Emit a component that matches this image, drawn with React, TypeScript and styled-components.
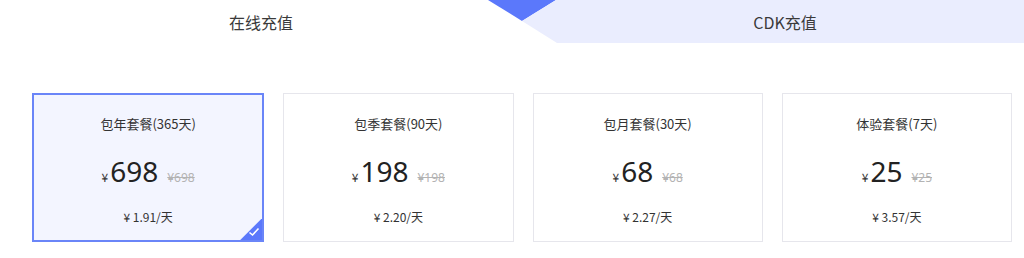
import React from "react";
import styled, { createGlobalStyle } from "styled-components";

const Global = createGlobalStyle`
  html, body { margin: 0; padding: 0; background: #fff; }
  body { font-family: "Noto Sans CJK SC", "Noto Sans", sans-serif; color: #333; }
`;

const Page = styled.div`
  width: 1024px;
  height: 258px;
  overflow: hidden;
  background: #fff;
`;

const Header = styled.div`
  position: relative;
  display: flex;
  height: 43px;
  &::before {
    content: "";
    position: absolute;
    left: 488px;
    top: 0;
    width: 68px;
    height: 21px;
    background: #5b78fb;
    clip-path: polygon(0 0, 100% 0, 50% 100%);
  }
`;

const Tab = styled.div<{ $active?: boolean }>`
  display: flex;
  align-items: center;
  justify-content: center;
  font-size: 16px;
  color: #3a3a3a;
  height: 43px;
  box-sizing: border-box;
  ${(p) =>
    p.$active
      ? `width: 522px;`
      : `flex: 1;
         padding-left: 24px;
         background: #eaedfe;
         clip-path: polygon(34px 0, 100% 0, 100% 100%, 35px 100%, 0 21px);`}
`;

const Cards = styled.div`
  display: flex;
  gap: 19px;
  padding: 50px 12px 0 32px;
`;

const Card = styled.div<{ $selected?: boolean }>`
  position: relative;
  flex: 1 1 0;
  min-width: 0;
  height: 149px;
  box-sizing: border-box;
  display: flex;
  flex-direction: column;
  align-items: center;
  border: ${(p) => (p.$selected ? "2px solid #6a85f8" : "1px solid #e6e6ec")};
  background: ${(p) => (p.$selected ? "#f3f5ff" : "#fff")};
  padding-top: ${(p) => (p.$selected ? "20px" : "21px")};
  overflow: hidden;
`;

const Title = styled.div`
  font-size: 13px;
  line-height: 18px;
  color: #333;
`;

const PriceRow = styled.div`
  display: flex;
  align-items: baseline;
  margin-top: 19px;
  height: 38px;
`;

const Yen = styled.span`
  font-size: 12px;
  margin-right: 2px;
  color: #333;
`;

const Amount = styled.span`
  font-size: 28px;
  line-height: 38px;
  color: #222;
  font-family: "Noto Sans", "Open Sans", sans-serif;
`;

const Old = styled.span`
  font-size: 12px;
  color: #b3b3b3;
  text-decoration: line-through;
  margin-left: 9px;
  font-family: "Noto Sans", "Open Sans", sans-serif;
`;

const PerDay = styled.div`
  margin-top: 18px;
  font-size: 12px;
  line-height: 18px;
  color: #333;
`;

const Corner = styled.div`
  position: absolute;
  right: 0;
  bottom: 0;
  width: 22px;
  height: 22px;
  background: #5b78fb;
  clip-path: polygon(100% 0, 100% 100%, 0 100%);
  display: flex;
  align-items: flex-end;
  justify-content: flex-end;
`;

const plans = [
  { title: "包年套餐(365天)", price: "698", old: "¥698", per: "¥ 1.91/天", selected: true },
  { title: "包季套餐(90天)", price: "198", old: "¥198", per: "¥ 2.20/天" },
  { title: "包月套餐(30天)", price: "68", old: "¥68", per: "¥ 2.27/天" },
  { title: "体验套餐(7天)", price: "25", old: "¥25", per: "¥ 3.57/天" },
];

export default function App() {
  return (
    <Page>
      <Global />
      <Header>
        <Tab $active>在线充值</Tab>
        <Tab>CDK充值</Tab>
      </Header>
      <Cards>
        {plans.map((p) => (
          <Card key={p.title} $selected={p.selected}>
            <Title>{p.title}</Title>
            <PriceRow>
              <Yen>¥</Yen>
              <Amount>{p.price}</Amount>
              <Old>{p.old}</Old>
            </PriceRow>
            <PerDay>{p.per}</PerDay>
            {p.selected && (
              <Corner>
                <svg width="12" height="10" viewBox="0 0 12 10" style={{ margin: "0 2px 3px 0" }}>
                  <path d="M1.5 5.5 L4.5 8 L10.5 1.5" fill="none" stroke="#fff" strokeWidth="1.6" />
                </svg>
              </Corner>
            )}
          </Card>
        ))}
      </Cards>
    </Page>
  );
}
